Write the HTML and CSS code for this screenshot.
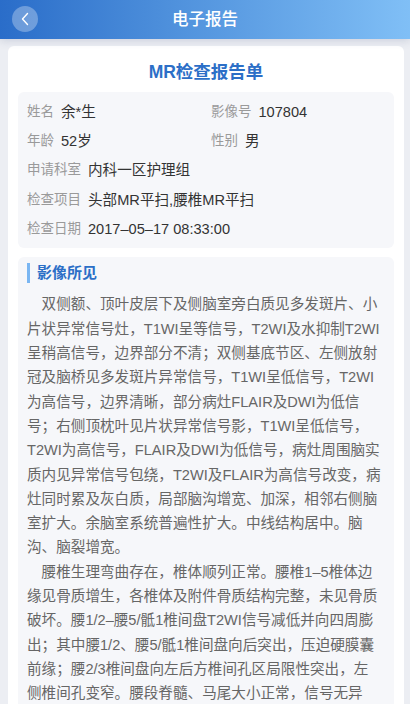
FILE: index.html
```html
<!DOCTYPE html>
<html lang="zh-CN">
<head>
<meta charset="utf-8">
<meta name="viewport" content="width=device-width, initial-scale=1">
<title>电子报告</title>
<link rel="stylesheet" href="styles.css">
</head>
<body>
<header class="topbar">
  <button class="back" aria-label="返回">
    <svg width="10" height="14" viewBox="0 0 10 14"><path d="M7.5 1.5 L2.5 7 L7.5 12.5" fill="none" stroke="#fff" stroke-width="1.4" stroke-linecap="round" stroke-linejoin="round"/></svg>
  </button>
  <h1 class="topbar-title">电子报告</h1>
</header>
<main class="card">
  <h2 class="report-title">MR检查报告单</h2>
  <section class="info">
    <div class="info-row"><span class="label">姓名</span><span class="value">余*生</span></div>
    <div class="info-row"><span class="label">影像号</span><span class="value">107804</span></div>
    <div class="info-row"><span class="label">年龄</span><span class="value">52岁</span></div>
    <div class="info-row"><span class="label">性别</span><span class="value">男</span></div>
    <div class="info-row wide"><span class="label">申请科室</span><span class="value">内科一区护理组</span></div>
    <div class="info-row wide"><span class="label">检查项目</span><span class="value">头部MR平扫,腰椎MR平扫</span></div>
    <div class="info-row wide"><span class="label">检查日期</span><span class="value">2017–05–17 08:33:00</span></div>
  </section>
  <section class="findings">
    <h3 class="section-title">影像所见</h3>
    <p class="para">双侧额、顶叶皮层下及侧脑室旁白质见多发斑片、小片状异常信号灶，T1WI呈等信号，T2WI及水抑制T2WI呈稍高信号，边界部分不清；双侧基底节区、左侧放射冠及脑桥见多发斑片异常信号，T1WI呈低信号，T2WI为高信号，边界清晰，部分病灶FLAIR及DWI为低信号；右侧顶枕叶见片状异常信号影，T1WI呈低信号，T2WI为高信号，FLAIR及DWI为低信号，病灶周围脑实质内见异常信号包绕，T2WI及FLAIR为高信号改变，病灶同时累及灰白质，局部脑沟增宽、加深，相邻右侧脑室扩大。余脑室系统普遍性扩大。中线结构居中。脑沟、脑裂增宽。</p>
    <p class="para">腰椎生理弯曲存在，椎体顺列正常。腰椎1–5椎体边缘见骨质增生，各椎体及附件骨质结构完整，未见骨质破坏。腰1/2–腰5/骶1椎间盘T2WI信号减低并向四周膨出；其中腰1/2、腰5/骶1椎间盘向后突出，压迫硬膜囊前缘；腰2/3椎间盘向左后方椎间孔区局限性突出，左侧椎间孔变窄。腰段脊髓、马尾大小正常，信号无异常。</p>
  </section>
</main>
</body>
</html>
```
FILE: styles.css
```css
* { box-sizing: border-box; }
html, body { margin: 0; padding: 0; }
body {
  background: #eceef3;
  font-family: "Liberation Sans", "Noto Sans CJK SC", sans-serif;
  color: #333;
}
.topbar {
  height: 39px;
  background: linear-gradient(90deg, #2a6dc9 0%, #4d8fdb 40%, #80bff6 100%);
  display: flex;
  align-items: center;
  justify-content: center;
  position: relative;
  box-shadow: 0 2px 8px rgba(60, 80, 120, 0.18);
}
.back {
  position: absolute;
  left: 12px;
  top: 6px;
  width: 26px;
  height: 26px;
  border-radius: 50%;
  border: none;
  padding: 0;
  background: rgba(255, 255, 255, 0.3);
  display: flex;
  align-items: center;
  justify-content: center;
}
.topbar-title {
  margin: 0;
  color: #fff;
  font-size: 16.5px;
  font-weight: 500;
  line-height: 39px;
}
.card {
  margin: 7px 6px 0 8px;
  background: #fff;
  border-radius: 6px;
  padding: 14px 10px 20px;
}
.report-title {
  margin: 0 0 8px;
  text-align: center;
  color: #2c6fc7;
  font-size: 17.5px;
  font-weight: 700;
  line-height: 24px;
}
.info {
  background: #f6f7fa;
  border-radius: 6px;
  padding: 5px 9px;
  display: grid;
  grid-template-columns: 184px 1fr;
}
.info-row {
  display: flex;
  align-items: center;
  height: 29.3px;
  font-size: 14.6px;
  line-height: 20px;
  white-space: nowrap;
}
.info-row.wide { grid-column: 1 / -1; }
.label {
  color: #9a9a9a;
  font-size: 13.5px;
  margin-right: 7px;
}
.value {
  color: #333;
  font-size: 14.6px;
}
.findings {
  margin-top: 9px;
  background: #f6f7fa;
  border-radius: 6px;
  padding: 6px 12px 12px 9px;
}
.section-title {
  margin: 0 0 9px;
  border-left: 3px solid #7ab6f2;
  padding-left: 7px;
  color: #2c6fc7;
  font-size: 15px;
  font-weight: 700;
  line-height: 20px;
}
.para {
  margin: 0;
  color: #666;
  font-size: 14.6px;
  line-height: 24.3px;
  text-indent: 1em;
}
```
